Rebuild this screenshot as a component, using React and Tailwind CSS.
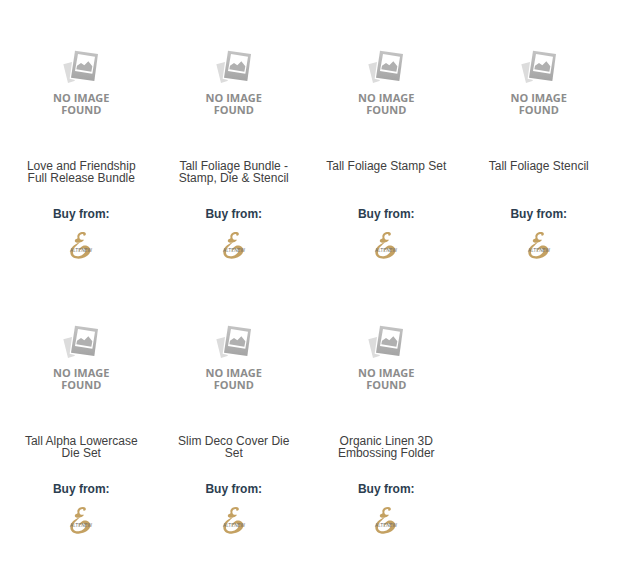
const products = [
  'Love and Friendship Full Release Bundle',
  'Tall Foliage Bundle - Stamp, Die & Stencil',
  'Tall Foliage Stamp Set',
  'Tall Foliage Stencil',
  'Tall Alpha Lowercase Die Set',
  'Slim Deco Cover Die Set',
  'Organic Linen 3D Embossing Folder',
];

function PhotoIcon() {
  return (
    <svg className="block" width="36" height="34" viewBox="0 0 108 102" aria-hidden="true">
      <defs>
        <linearGradient id="frame" x1="0" y1="0" x2="0" y2="1">
          <stop offset="0" stopColor="#c4c4c4" />
          <stop offset="1" stopColor="#a4a4a4" />
        </linearGradient>
      </defs>
      <path d="M1 43 L27 36 L20 86 L36 90 L34 93 L15 99 Z" fill="#dcdcdc" />
      <path d="M36 2 L105 12 L94 93 L24 83 Z" fill="url(#frame)" />
      <path d="M45 12 L96 20 L88 71 L36 63 Z" fill="#fff" />
      <path d="M42 47 L54 39 L64 46 L76 34 L88 49 L85 65 L40 58 Z" fill="#b0b0b0" />
    </svg>
  );
}

function AltenewLogo() {
  return (
    <svg className="block" width="30" height="30" viewBox="0 0 90 90" role="img" aria-label="Altenew">
      <g fill="#c4a162">
        <path d="M58 16 C62 11 58 6 51 6 C41 6 34 12 34 19 C34 23 36 25 33 26 C24 28 24 37 34 38 C43 38 52 34 54 29 C46 31 40 28 40 21 C40 15 46 11 52 12 C50 16 54 19 58 16 Z" />
        <path d="M42 36 C28 42 14 51 13 65 C12 78 22 86 38 86 C57 85 73 75 73 61 C73 50 60 44 50 48 C42 52 38 59 40 65 C43 58 49 54 54 56 C64 59 57 74 41 78 C28 81 20 75 21 65 C22 52 34 46 42 36 Z" />
      </g>
      <text
        x="45"
        y="66"
        textAnchor="middle"
        fontSize="14"
        fill="#6b6b6b"
        fontFamily="Inter, sans-serif"
      >
        ALTENEW
      </text>
    </svg>
  );
}

function Product({ title }) {
  return (
    <article className="flex h-[275px] flex-col items-center px-3.5 pt-[50px] text-center">
      <a href="#product" className="flex h-[110px] flex-col items-center" aria-label={title}>
        <PhotoIcon />
        <span className="mt-2 w-[64px] font-['Open_Sans',sans-serif] text-[11px] leading-[12px] font-bold text-[#8c8c8c]">
          NO IMAGE FOUND
        </span>
      </a>
      <h2 className="h-[46px] text-[12px] leading-[12px] text-[#404040]">
        <a href="#product">{title}</a>
      </h2>
      <p className="text-[12px] leading-[16px] font-bold text-[#2c3e50]">Buy from:</p>
      <a href="#altenew" className="mt-2">
        <AltenewLogo />
      </a>
    </article>
  );
}

export default function App() {
  return (
    <main className="grid grid-cols-4 bg-white px-[5px] pb-5 font-['Liberation_Sans',Arial,sans-serif]">
      {products.map((title) => (
        <Product key={title} title={title} />
      ))}
    </main>
  );
}
